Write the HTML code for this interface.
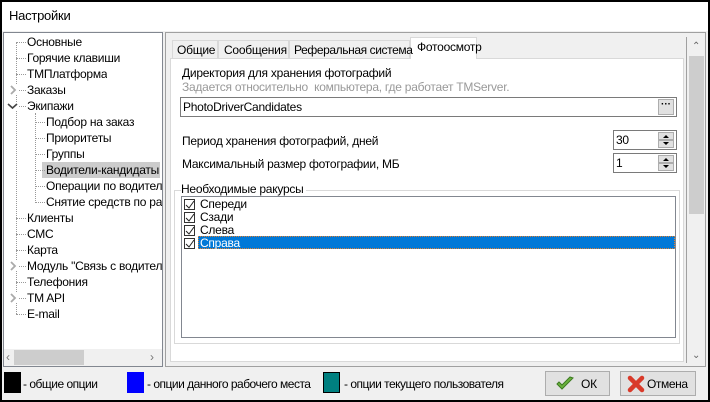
<!DOCTYPE html>
<html><head><meta charset="utf-8"><style>
*{margin:0;padding:0;box-sizing:border-box}
body{width:710px;height:402px;overflow:hidden;background:#000;font-family:"Liberation Sans",sans-serif;font-size:12px;color:#000;position:relative}
.a{position:absolute}
.t{position:absolute;white-space:nowrap;line-height:14px;letter-spacing:-0.25px}
.cb{position:absolute;width:11px;height:11px;border:1px solid #333;background:#fff}
.cb svg{position:absolute;left:0;top:0}
</style></head><body>
<div class="a" style="left:2px;top:2px;width:706px;height:398px;background:#f0f0f0"></div>
<div class="a" style="left:2px;top:2px;width:706px;height:29px;background:#fff"></div>
<div class="t" style="left:9px;top:9px;font-size:13px">Настройки</div>

<!-- tree -->
<div class="a" style="left:3px;top:32px;width:160px;height:335px;background:#fff;border:1px solid #828790"></div>
<div class="a" style="left:16px;top:42px;height:272px;border-left:1px dotted #999"></div>
<div class="a" style="left:35px;top:113px;height:88px;border-left:1px dotted #999"></div>
<div class="a" style="left:42px;top:162px;width:118px;height:16px;background:#ccc"></div>
<div id="tr"></div>
<div class="a" style="left:4px;top:349px;width:158px;height:17px;background:#f0f0f0"></div>
<div class="a" style="left:14px;top:350px;width:70px;height:15px;background:#cdcdcd"></div>
<div class="t" style="left:6px;top:350px;color:#777">‹</div>
<div class="t" style="left:150px;top:350px;color:#777">›</div>

<!-- right panel -->
<div class="a" style="left:165px;top:32px;width:541px;height:335px;border:1px solid #a0a0a0;background:#f0f0f0"></div>
<div class="a" style="left:170px;top:58px;width:514px;height:304px;background:#fff;border:1px solid #d9d9d9"></div>
<div class="a" style="left:172px;top:40px;width:46px;height:19px;border:1px solid #d9d9d9;background:#f0f0f0"></div>
<div class="a" style="left:218px;top:40px;width:71px;height:19px;border:1px solid #d9d9d9;background:#f0f0f0"></div>
<div class="a" style="left:289px;top:40px;width:121px;height:19px;border:1px solid #d9d9d9;background:#f0f0f0"></div>
<div class="a" style="left:410px;top:37px;width:67px;height:22px;border:1px solid #d9d9d9;border-bottom:none;background:#fff"></div>
<div class="t" style="left:177px;top:43px">Общие</div>
<div class="t" style="left:224px;top:43px">Сообщения</div>
<div class="t" style="left:294px;top:43px;letter-spacing:-0.4px">Реферальная система</div>
<div class="t" style="left:417px;top:40px">Фотоосмотр</div>

<div class="t" style="left:182px;top:66px">Директория для хранения фотографий</div>
<div class="t" style="left:182px;top:80px;color:#999">Задается относительно&nbsp; компьютера, где работает TMServer.</div>
<div class="a" style="left:180px;top:97px;width:497px;height:20px;border:1px solid #7a7a7a;background:#fff"></div>
<div class="t" style="left:183px;top:100px">PhotoDriverCandidates</div>
<div class="a" style="left:658px;top:99px;width:16px;height:16px;border:1px solid #adadad;background:#e1e1e1;font-size:10px;text-align:center;line-height:10px;font-weight:bold">···</div>

<div class="t" style="left:182px;top:134px">Период хранения фотографий, дней</div>
<div class="a" style="left:613px;top:130px;width:64px;height:20px;border:1px solid #7a7a7a;background:#fff"></div>
<div class="t" style="left:616px;top:133px">30</div>
<div class="t" style="left:182px;top:157px">Максимальный размер фотографии, МБ</div>
<div class="a" style="left:613px;top:153px;width:64px;height:20px;border:1px solid #7a7a7a;background:#fff"></div>
<div class="t" style="left:616px;top:156px">1</div>
<div id="sp"></div>

<div class="a" style="left:174px;top:190px;width:506px;height:154px;border:1px solid #d9d9d9"></div>
<div class="t" style="left:181px;top:182px;background:#fff;padding-right:2px">Необходимые ракурсы</div>
<div class="a" style="left:181px;top:196px;width:495px;height:142px;border:1px solid #828790;background:#fff"></div>
<div class="a" style="left:198px;top:236px;width:477px;height:13px;background:#0078d7;border:1px dotted #e08030"></div>
<div id="cbs"></div>

<!-- vscroll -->
<div class="a" style="left:686px;top:37px;width:18px;height:326px;background:#f0f0f0;border-left:1px solid #a0a0a0"></div>
<div class="a" style="left:689px;top:56px;width:15px;height:158px;background:#cdcdcd"></div>
<div class="t" style="left:692px;top:40px;color:#666;font-size:10px">⌃</div>
<div class="t" style="left:692px;top:349px;color:#666;font-size:10px">⌄</div>

<!-- bottom -->
<div class="a" style="left:4px;top:372px;width:17px;height:21px;background:#000"></div>
<div class="t" style="left:23px;top:377px;letter-spacing:-0.5px">- общие опции</div>
<div class="a" style="left:127px;top:372px;width:17px;height:21px;background:#00f"></div>
<div class="t" style="left:147px;top:377px;letter-spacing:-0.5px">- опции данного рабочего места</div>
<div class="a" style="left:323px;top:372px;width:17px;height:21px;background:#008080;border:1px solid #000"></div>
<div class="t" style="left:344px;top:377px;letter-spacing:-0.5px">- опции текущего пользователя</div>

<div class="a" style="left:545px;top:371px;width:65px;height:25px;border:1px solid #adadad;background:#e1e1e1"></div>
<svg class="a" style="left:555px;top:376px" width="20" height="16"><path d="M2 8 L7 13 L18 2 L15 1 L7 9 L4 6 Z" fill="#6cb33f" stroke="#3c7a20"/></svg>
<div class="t" style="left:581px;top:377px">ОК</div>
<div class="a" style="left:620px;top:371px;width:76px;height:25px;border:1px solid #adadad;background:#e1e1e1"></div>
<svg class="a" style="left:627px;top:375px" width="18" height="18"><path d="M3 3 L15 15 M15 3 L3 15" stroke="#d93a2a" stroke-width="4.5" stroke-linecap="round"/></svg>
<div class="t" style="left:647px;top:377px;letter-spacing:-0.4px">Отмена</div>

<script>
var items=[["Основные",0,0],["Горячие клавиши",0,0],["ТМПлатформа",0,0],["Заказы",0,1],["Экипажи",0,2],["Подбор на заказ",1,0],["Приоритеты",1,0],["Группы",1,0],["Водители-кандидаты",1,0],["Операции по водителям",1,0],["Снятие средств по расписанию",1,0],["Клиенты",0,0],["СМС",0,0],["Карта",0,0],["Модуль \"Связь с водителями\"",0,1],["Телефония",0,0],["TM API",0,1],["E-mail",0,0]];
var h="";items.forEach(function(it,i){var y=34+i*16;var x=it[1]?46:27;var lx=it[1]?35:16;
h+='<div class="a" style="left:'+lx+'px;top:'+(y+8)+'px;width:'+(x-lx-1)+'px;border-top:1px dotted #999"></div>';
if(it[2]==1)h+='<svg class="a" style="left:8px;top:'+(y+3)+'px" width="10" height="10" ><rect width="10" height="10" fill="#fff"/><path d="M3 1 L7 5 L3 9" stroke="#aaa" stroke-width="1.8" fill="none"/></svg>';
if(it[2]==2)h+='<svg class="a" style="left:7px;top:'+(y+4)+'px" width="11" height="8"><rect width="11" height="8" fill="#fff"/><path d="M1 2 L5.5 6 L10 2" stroke="#444" stroke-width="1.6" fill="none"/></svg>';
h+='<div class="t" style="left:'+x+'px;top:'+(y+1)+'px;max-width:'+(162-x)+'px;overflow:hidden">'+it[0]+'</div>';});
document.getElementById("tr").innerHTML=h;
var s="";[130,153].forEach(function(y){s+='<div class="a" style="left:658px;top:'+(y+2)+'px;width:16px;height:8px;border:1px solid #adadad;background:#e1e1e1"></div><div class="a" style="left:658px;top:'+(y+10)+'px;width:16px;height:8px;border:1px solid #adadad;background:#e1e1e1"></div><svg class="a" style="left:658px;top:'+(y+2)+'px" width="16" height="16"><path d="M5 6 L8 3 L11 6Z M5 10 L8 13 L11 10Z" fill="#000"/></svg>';});
document.getElementById("sp").innerHTML=s;
var c="";["Спереди","Сзади","Слева","Справа"].forEach(function(n,i){var y=198+i*13;
c+='<div class="cb" style="left:184px;top:'+(y+1)+'px"><svg width="10" height="10"><path d="M1 5 L4 8 L9 1" stroke="#222" fill="none"/></svg></div>';
c+='<div class="t" style="left:200px;top:'+(y-1)+'px;'+(i==3?'color:#fff':'')+'">'+n+'</div>';});
document.getElementById("cbs").innerHTML=c;
</script>
</body></html>
